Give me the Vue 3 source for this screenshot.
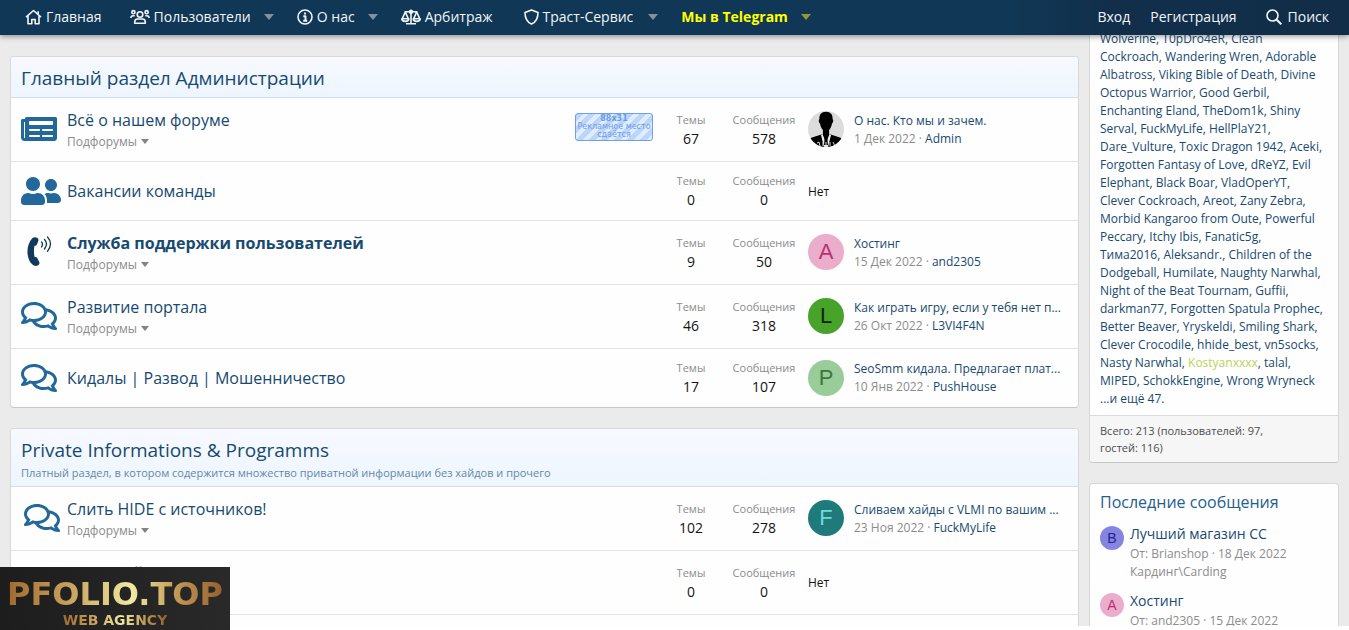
<script setup>
const sections = [
  {
    title: 'Главный раздел Администрации',
    nodes: [
      { icon: 'news', title: 'Всё о нашем форуме', sub: true, promo: true, topics: '67', posts: '578',
        last: { photo: true, title: 'О нас. Кто мы и зачем.', date: '1 Дек 2022', user: 'Admin' } },
      { icon: 'users', title: 'Вакансии команды', topics: '0', posts: '0' },
      { icon: 'phone', title: 'Служба поддержки пользователей', bold: true, sub: true, topics: '9', posts: '50',
        last: { letter: 'A', tone: 'pink', title: 'Хостинг', date: '15 Дек 2022', user: 'and2305' } },
      { icon: 'chat', title: 'Развитие портала', sub: true, topics: '46', posts: '318',
        last: { letter: 'L', tone: 'green', title: 'Как играть игру, если у тебя нет п...', date: '26 Окт 2022', user: 'L3VI4F4N' } },
      { icon: 'chat', title: 'Кидалы | Развод | Мошенничество', topics: '17', posts: '107',
        last: { letter: 'P', tone: 'mint', title: 'SeoSmm кидала. Предлагает плат...', date: '10 Янв 2022', user: 'PushHouse' } }
    ]
  },
  {
    title: 'Private Informations & Programms',
    desc: 'Платный раздел, в котором содержится множество приватной информации без хайдов и прочего',
    nodes: [
      { icon: 'chat', shifted: true, title: 'Слить HIDE с источников!', sub: true, topics: '102', posts: '278',
        last: { letter: 'F', tone: 'teal', title: 'Сливаем хайды с VLMI по вашим ...', date: '23 Ноя 2022', user: 'FuckMyLife' } },
      { icon: 'chat', title: 'Торговый', sub: true, topics: '0', posts: '0' }
    ]
  }
]

const online = [
  ['Wolverine', 'T0pDro4eR', 'Clean'],
  ['Cockroach', 'Wandering Wren', 'Adorable'],
  ['Albatross', 'Viking Bible of Death', 'Divine'],
  ['Octopus Warrior', 'Good Gerbil,'],
  ['Enchanting Eland', 'TheDom1k', 'Shiny'],
  ['Serval', 'FuckMyLife', 'HellPlaY21,'],
  ['Dare_Vulture', 'Toxic Dragon 1942', 'Aceki,'],
  ['Forgotten Fantasy of Love', 'dReYZ', 'Evil'],
  ['Elephant', 'Black Boar', 'VladOperYT,'],
  ['Clever Cockroach', 'Areot', 'Zany Zebra,'],
  ['Morbid Kangaroo from Oute', 'Powerful'],
  ['Peccary', 'Itchy Ibis', 'Fanatic5g,'],
  ['Тима2016', 'Aleksandr.', 'Children of the'],
  ['Dodgeball', 'Humilate', 'Naughty Narwhal,'],
  ['Night of the Beat Tournam', 'Guffii,'],
  ['darkman77', 'Forgotten Spatula Prophec,'],
  ['Better Beaver', 'Yryskeldi', 'Smiling Shark,'],
  ['Clever Crocodile', 'hhide_best', 'vn5socks,'],
  ['Nasty Narwhal', 'Kostyanxxxx', 'talal,'],
  ['MIPED', 'SchokkEngine', 'Wrong Wryneck'],
  ['...и ещё 47.']
]

const recent = [
  { letter: 'B', tone: 'violet', title: 'Лучший магазин CC', meta: 'От: Brianshop · 18 Дек 2022', forum: 'Кардинг\\Carding' },
  { letter: 'A', tone: 'pink', title: 'Хостинг', meta: 'От: and2305 · 15 Дек 2022' }
]
</script>

<template>
  <div class="page">
    <header class="bar">
      <nav class="nav">
        <a href="#" class="item">
          <svg width="17" height="16" viewBox="0 0 17 16" class="line"><path d="M1 8.2 8.5 1.5 16 8.2M3 7v7.8h3.8v-4.3h3.4v4.3H14V7M13.2 2.2v3" /></svg>
          <span>Главная</span>
        </a>
        <a href="#" class="item">
          <svg width="20" height="16" viewBox="0 0 20 16" class="line"><circle cx="10" cy="5.5" r="2.8" /><circle cx="3.4" cy="3.2" r="1.6" /><circle cx="16.6" cy="3.2" r="1.6" /><path d="M4.700 14.200v-1.200c0-1.900 1.200-3 2.900-3h4.800c1.700 0 2.900 1.100 2.900 3v1.200zM.9 8.900c0-1.400.9-2.100 2.100-2.100h1.700M19.100 8.900c0-1.400-.9-2.100-2.100-2.100h-1.700" /></svg>
          <span>Пользователи</span>
        </a>
        <button class="caret" aria-label="Меню пользователей"></button>
        <a href="#" class="item">
          <svg width="16" height="16" viewBox="0 0 16 16" class="line"><circle cx="8" cy="8" r="7" /><path d="M6.300 7.200H8.500v4.300M6.200 11.700h4M8 3.500v2" stroke-width="1.900" /></svg>
          <span>О нас</span>
        </a>
        <button class="caret" aria-label="Меню о нас"></button>
        <a href="#" class="item">
          <svg width="20" height="16" viewBox="0 0 20 16" class="line"><path d="M3.500 2.800H16.500M10 1v13.500M5 14.800h10M4.300 3 1.200 9.800M4.300 3l3.100 6.800M15.700 3l-3.100 6.800M15.700 3l3.100 6.800M.8 9.700h7c0 3.500-7 3.500-7 0zM12.200 9.700h7c0 3.500-7 3.500-7 0z" /><circle cx="10" cy="2.700" r="1.400" /></svg>
          <span>Арбитраж</span>
        </a>
        <a href="#" class="item trust">
          <svg width="15" height="16" viewBox="0 0 15 16" class="line"><path d="M7.500.9 14 3.400c0 5.300-2.200 9.700-6.500 11.700C3.200 13.100 1 8.700 1 3.400z" /></svg>
          <span>Траст-Сервис</span>
        </a>
        <button class="caret" aria-label="Меню траст-сервиса"></button>
        <a href="#" class="item telegram">Мы в Telegram</a>
        <button class="caret gold" aria-label="Меню Telegram"></button>
      </nav>
      <nav class="account">
        <a href="#">Вход</a>
        <a href="#">Регистрация</a>
        <a href="#" class="search">
          <svg width="16" height="16" viewBox="0 0 16 16" class="line"><circle cx="6.500" cy="6.500" r="5.500" /><path d="m10.700 10.700 4.600 4.600" stroke-width="2" /></svg>
          <span>Поиск</span>
        </a>
      </nav>
    </header>

    <div class="layout">
      <main class="forums">
        <section v-for="s in sections" :key="s.title" class="block">
          <header class="head">
            <h2><a href="#">{{ s.title }}</a></h2>
            <p v-if="s.desc">{{ s.desc }}</p>
          </header>
          <article v-for="n in s.nodes" :key="n.title" class="node" :class="{ tall: n.sub }">
            <div class="icon" :class="{ shifted: n.shifted }">
              <svg v-if="n.icon === 'chat'" width="36" height="32" viewBox="0 0 576 512"><path d="M532 386.200c27.500-27.100 44-61.100 44-98.200 0-80-76.500-146.100-176.200-157.900C368.300 72.500 294.300 32 208 32 93.100 32 0 103.600 0 192c0 37 16.500 71 44 98.200-15.300 30.700-37.300 54.500-37.700 54.900-6.300 6.700-8.100 16.500-4.400 25 3.600 8.500 12 14 21.200 14 53.500 0 96.700-20.200 125.200-38.800 9.200 2.100 18.700 3.700 28.400 4.900C208.100 407.600 281.800 448 368 448c20.800 0 40.800-2.400 59.800-6.800C456.300 459.700 499.400 480 553 480c9.200 0 17.500-5.500 21.200-14 3.600-8.500 1.900-18.300-4.400-25-.4-.3-22.500-24.100-37.800-54.800zm-392.800-92.300L122.100 305c-14.100 9.100-28.500 16.300-43.100 21.400 2.700-4.700 5.400-9.700 8-14.800l15.500-31.100L77.700 256C64.200 242.600 48 220.700 48 192c0-60.700 73.300-112 160-112s160 51.300 160 112-73.300 112-160 112c-16.500 0-33-1.900-49-5.600l-19.800-4.500zM498.300 352l-24.700 24.400 15.500 31.100c2.600 5.100 5.300 10.100 8 14.800-14.600-5.100-29-12.300-43.100-21.400l-17.100-11.100-19.900 4.600c-16 3.700-32.500 5.600-49 5.600-54 0-102.200-20.100-131.300-49.700C338 339.500 416 272.900 416 192c0-3.400-.4-6.700-.7-10C479.700 196.500 528 238.800 528 288c0 28.700-16.200 50.600-29.700 64z" /></svg>
              <svg v-else-if="n.icon === 'users'" width="40" height="32" viewBox="0 0 640 512"><path d="M192 256c61.900 0 112-50.100 112-112S253.900 32 192 32 80 82.100 80 144s50.100 112 112 112zm76.800 32h-8.300c-20.800 10-43.900 16-68.500 16s-47.600-6-68.500-16h-8.300C51.600 288 0 339.600 0 403.200V432c0 26.500 21.500 48 48 48h288c26.500 0 48-21.500 48-48v-28.800c0-63.600-51.600-115.200-115.200-115.200zM480 256c53 0 96-43 96-96s-43-96-96-96-96 43-96 96 43 96 96 96zm48 32h-3.800c-13.900 4.800-28.600 8-44.200 8s-30.300-3.200-44.200-8H432c-20.400 0-39.200 5.900-55.700 15.400 24.400 26.300 39.700 61.200 39.700 99.800v38.400c0 2.200-.5 4.300-.6 6.400H592c26.500 0 48-21.500 48-48 0-61.900-50.100-112-112-112z" /></svg>
              <svg v-else-if="n.icon === 'news'" width="36" height="32" viewBox="0 0 576 512"><path fill-rule="evenodd" d="M552 64H88c-13 0-24 11-24 24v8H24c-13 0-24 11-24 24v272c0 31 25 56 56 56h472c27 0 48-21 48-48V88c0-13-11-24-24-24zM56 400a8 8 0 0 1-8-8V144h16v248a8 8 0 0 1-8 8zM140 352h152q12 0 12 12v8q0 12-12 12H140q-12 0-12-12v-8q0-12 12-12zM348 352h152q12 0 12 12v8q0 12-12 12H348q-12 0-12-12v-8q0-12 12-12zM140 256h152q12 0 12 12v8q0 12-12 12H140q-12 0-12-12v-8q0-12 12-12zM348 256h152q12 0 12 12v8q0 12-12 12H348q-12 0-12-12v-8q0-12 12-12zM140 128h360q12 0 12 12v40q0 12-12 12H140q-12 0-12-12v-40q0-12 12-12z" /></svg>
              <svg v-else width="36" height="34" viewBox="-4 0 36 34" class="phone"><path d="M7.500 3C9 1.800 11 1.900 12.500 3c1 .8 1.200 2 .8 3l-1.500 3.800c-.5 1-1.300 1.200-2.300 1-.8 3.800-.8 7.600.2 11.400 1-.3 2-.1 2.500.8l2 4c.6 1.400.2 2.400-1 3.200-1.700 1.200-4 1.100-5.800-.6C.8 24 .8 9.500 7.500 3z" /><g fill="none" stroke="currentColor" stroke-linecap="round"><path d="M16.500 7q2 2 0 5" stroke-width="1.300" /><path d="M19.500 4.500q4 4 0 9.500" stroke-width="1.300" /><path d="M22.500 2q6 6.600 0 14.300" stroke-width="1.300" /></g></svg>
            </div>
            <div class="name">
              <h3 :class="{ bold: n.bold }"><a href="#">{{ n.title }}</a></h3>
              <button v-if="n.sub" class="sub">Подфорумы<i class="tri"></i></button>
            </div>
            <a v-if="n.promo" href="#" class="promo"><b>88x31</b><span>Рекламное место</span><span>сдаётся</span></a>
            <dl class="stats">
              <div class="topics"><dt>Темы</dt><dd>{{ n.topics }}</dd></div>
              <div class="posts"><dt>Сообщения</dt><dd>{{ n.posts }}</dd></div>
            </dl>
            <div class="last">
              <template v-if="n.last">
                <a v-if="n.last.photo" href="#" class="avatar" aria-label="Admin">
                  <svg width="36" height="36" viewBox="0 0 36 36"><rect width="36" height="36" fill="#dcdcdc" /><path d="M18 .8c4.600 0 6.900 2.900 6.600 7.500 1 .3.700 3.500-.6 4.200-.5 3-1.500 5-2.900 6.500v4l10.900 3.500c2.500 1 4 4 4 9.500H0c0-5.500 1.500-8.500 4-9.500L14.900 23v-4c-1.400-1.500-2.400-3.500-2.900-6.500-1.300-.7-1.600-3.900-.6-4.200C11.100 3.700 13.400.8 18 .8z" /><path d="m14.500 23 3.500 9 3.500-9 1.500 1-3 12h-4l-3-12z" fill="#eee" /><path d="m17 24h2l1 10h-4z" /><path d="m9 32 2-1 1 4m3-4v4m3-4v4m4-4v4m3-4 2 4" stroke="#ddd" fill="none" /></svg>
                </a>
                <a v-else href="#" class="avatar" :class="n.last.tone">{{ n.last.letter }}</a>
                <div class="post">
                  <a href="#" class="thread">{{ n.last.title }}</a>
                  <div class="when">{{ n.last.date }} · <a href="#">{{ n.last.user }}</a></div>
                </div>
              </template>
              <span v-else class="none">Нет</span>
            </div>
          </article>
        </section>
      </main>

      <aside class="side">
        <section class="block">
          <div class="names">
            <div v-for="(line, i) in online" :key="i"><template v-for="(u, j) in line" :key="u"><a href="#" :class="{ lime: u === 'Kostyanxxxx' }">{{ u }}</a><template v-if="j < line.length - 1">, </template></template></div>
          </div>
          <footer class="total">Всего: 213 (пользователей: 97,<br>гостей: 116)</footer>
        </section>
        <section class="block recent">
          <h3><a href="#">Последние сообщения</a></h3>
          <article v-for="r in recent" :key="r.title" class="entry">
            <a href="#" class="avatar small" :class="r.tone">{{ r.letter }}</a>
            <div>
              <a href="#" class="topic">{{ r.title }}</a>
              <div class="meta">{{ r.meta }}</div>
              <div v-if="r.forum" class="meta">{{ r.forum }}</div>
            </div>
          </article>
        </section>
      </aside>
    </div>

    <div class="badge">
      <strong>PFOLIO.TOP</strong>
      <span>WEB AGENCY</span>
    </div>
  </div>
</template>

<style>
body { background: #fff; }
</style>

<style scoped>
* { box-sizing: border-box; }
.page {
  position: relative;
  height: 100vh;
  padding-bottom: 4px;
  overflow: hidden;
  font-family: "Open Sans", "Noto Sans", sans-serif;
  font-size: 14px;
  color: #141414;
}
a { color: #174a70; text-decoration: none; }
h2, h3, p, dl, dd { margin: 0; font-weight: 400; }
button { border: 0; padding: 0; background: none; font: inherit; }

.bar {
  position: absolute;
  inset: 0 0 auto;
  z-index: 2;
  height: 35px;
  padding-bottom: 2px;
  display: flex;
  justify-content: space-between;
  background: linear-gradient(90deg, #103755 0%, #103755 75%, #112f4b 82%, #112d48 100%);
  box-shadow: 0 1px 6px rgba(0, 0, 0, 0.45);
  line-height: 33px;
  white-space: nowrap;
}
.bar a { color: #f2f6f9; }
.line { fill: none; stroke: currentColor; stroke-width: 1.6; stroke-linejoin: round; }
.nav { display: flex; padding-left: 10px; }
.item { display: flex; align-items: center; gap: 4px; padding: 0 13px 0 15px; }
.item.trust { padding: 0 15px 0 18px; }
.caret { width: 18px; display: grid; align-items: center; justify-items: start; }
.caret::before { content: ""; border: 5px solid transparent; border-top: 6px solid #7d93a5; border-bottom: 0; }
.caret.gold::before { border-top-color: #8c9c34; }
.bar .telegram { color: #ffff00; font-weight: 700; }
.account { display: flex; padding-right: 10px; }
.account a { padding: 0 10px; }
.account .search { display: flex; align-items: center; gap: 6px; padding-left: 19px; }

.layout { display: flex; gap: 10px; height: 100%; padding: 0 10px; overflow: hidden; background: #ebebeb; }
.forums { flex: 1; min-width: 0; padding-top: 56px; display: flex; flex-direction: column; }
.block {
  margin-bottom: 20px;
  background: #fefefe;
  border: 1px solid #d8d8d8;
  border-bottom-color: #c6c6c6;
  border-radius: 4px;
}
.block:last-child { flex: 1; margin-bottom: 0; border-bottom: 0; border-radius: 4px 4px 0 0; }
.head {
  padding: 7px 10px 5px;
  background: linear-gradient(#f7faff, #edf5fe);
  border-bottom: 1px solid #d9dde0;
  border-radius: 3px 3px 0 0;
}
.head h2 { font-size: 19px; line-height: 28px; }
.head p { font-size: 11px; line-height: 17px; color: #6388a6; }
.node { display: flex; align-items: center; height: 59px; padding: 0 10px; border-bottom: 1px solid #e3e3e3; }
.node.tall { height: 64px; }
.block:first-child .node:last-child { height: 58px; border-bottom: 0; }
.icon { width: 46px; display: flex; fill: #23689b; }
.icon.shifted { padding-left: 3px; }
.tall .icon, .tall .avatar { margin-bottom: 2px; }
.phone { fill: #12395a; color: #12395a; }
.name { flex: 1; min-width: 0; }
.name h3 { font-size: 16px; line-height: 24px; }
.name h3.bold { font-weight: 700; }
.tall .name { padding-bottom: 1px; }
.sub { display: flex; align-items: center; gap: 4px; margin-top: 1px; font-size: 12px; line-height: 18px; color: #8c8c8c; }
.tri { border: 4px solid transparent; border-top: 5px solid #828282; border-bottom: 0; }
.promo {
  width: 78px;
  height: 28px;
  margin: 0 9px 6px 0;
  padding-top: 1px;
  border: 1px solid #6ea0e8;
  border-radius: 3px;
  background: repeating-linear-gradient(135deg, #bcd6fb 0 5px, #e1edff 5px 9px);
  color: #6d9ce6;
  font: 8px/8px "DejaVu Sans", sans-serif;
  text-align: center;
  white-space: nowrap;
}
.promo b, .promo span { display: block; }
.stats { display: flex; text-align: center; }
.topics { width: 58px; }
.posts { width: 88px; }
.stats dt { font-size: 11px; line-height: 18px; color: #8c8c8c; }
.stats dd { font-size: 14px; line-height: 20px; }
.last { width: 260px; display: flex; align-items: center; gap: 10px; }
.none { font-size: 12px; }
.avatar {
  flex: none;
  width: 36px;
  height: 36px;
  border-radius: 50%;
  overflow: hidden;
  font: 22px/36px "Liberation Sans", sans-serif;
  text-align: center;
}
.avatar svg { display: block; }
.avatar.small { width: 24px; height: 24px; font-size: 14px; line-height: 24px; }
.pink { background: #ebadcc; color: #b8336f; }
.green { background: #47a329; color: #0e2408; }
.mint { background: #99cc99; color: #3c783c; }
.teal { background: #1f7a7a; color: #70dbdb; }
.violet { background: #8585e0; color: #24248f; }
.post { min-width: 0; font-size: 12px; line-height: 18px; white-space: nowrap; color: #8c8c8c; }
.thread { display: block; }

.side { width: 250px; padding-top: 20px; display: flex; flex-direction: column; }
.names { padding: 9px 10px 7px; font-size: 12px; line-height: 18px; white-space: nowrap; color: #174a70; }
.names .lime { color: #b9d45c; }
.total { padding: 6px 10px; border-top: 1px solid #dcdcdc; background: #f6f6f6; border-radius: 0 0 3px 3px; font-size: 11px; line-height: 17px; color: #4c4c4c; }
.recent h3 { padding: 6px 10px 5px; font-size: 16px; line-height: 24px; }
.recent h3 a { color: #1f5f8e; }
.entry { display: flex; gap: 6px; padding: 4px 10px 5px; }
.entry .small { margin-top: 3px; }
.topic { display: block; line-height: 22px; }
.meta { font-size: 12px; line-height: 18px; color: #8c8c8c; }

.badge {
  position: absolute;
  left: 0;
  bottom: 0;
  z-index: 3;
  width: 230px;
  height: 63px;
  padding-top: 9px;
  display: flex;
  flex-direction: column;
  align-items: center;
  background: linear-gradient(90deg, #1d1d1d, #292929);
  font-family: "DejaVu Sans", sans-serif;
  font-weight: 700;
}
.badge strong, .badge span {
  background: linear-gradient(90deg, #a0692f 0%, #c7a05a 28%, #f1e9a0 58%, #c39a55 78%, #94602c 100%);
  -webkit-background-clip: text;
  background-clip: text;
  color: transparent;
}
.badge strong { font-size: 32px; line-height: 36px; }
.badge span { font-size: 14px; line-height: 16px; }
</style>
